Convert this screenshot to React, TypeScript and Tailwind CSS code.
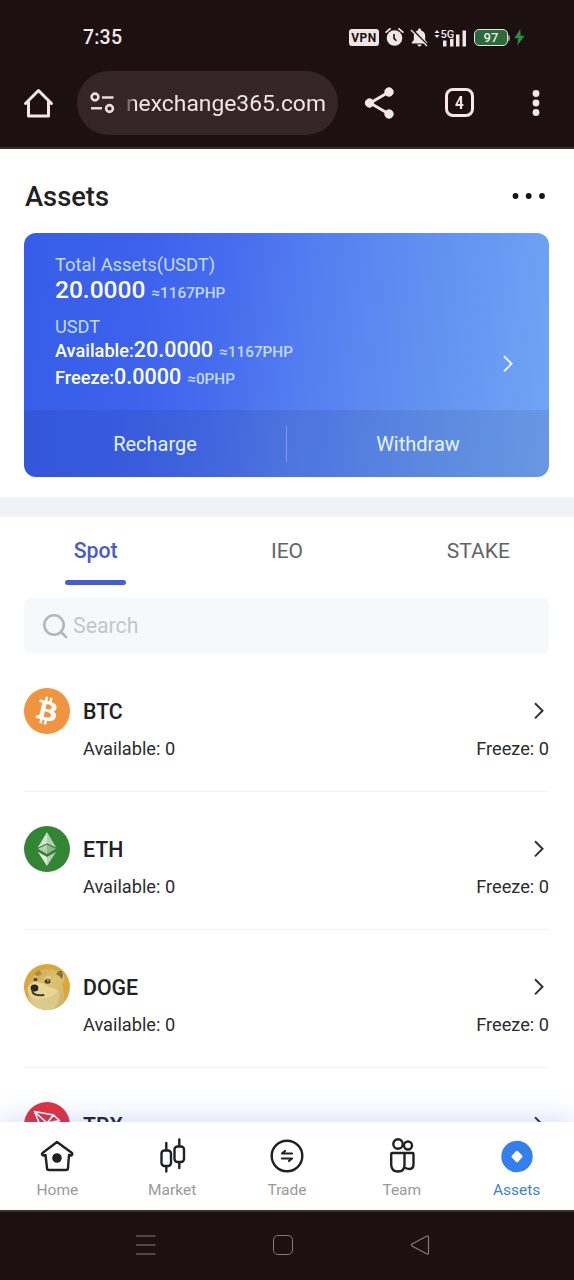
import type { ReactNode } from "react";
import { FaBitcoin } from "react-icons/fa";

function StatusIcons() {
  return (
    <div className="flex items-center">
      <span className="flex h-[17px] w-[30px] items-center justify-center rounded-[3px] bg-[#f0e6e6] text-[12px] leading-none font-bold tracking-[0.5px] text-[#1d1011]">
        VPN
      </span>
      <svg className="ml-[6px]" width="19" height="19" viewBox="0 0 19 19" fill="none">
        <circle cx="9.5" cy="10" r="7.8" fill="#f0e6e6" />
        <path d="M1.2 4.1 5 0.9M17.8 4.1 14 0.9" stroke="#f0e6e6" strokeWidth="1.8" strokeLinecap="round" />
        <path d="M9 6v4.3l2.4 2.4" stroke="#1d1011" strokeWidth="1.6" />
      </svg>
      <svg className="ml-[6px]" width="19" height="19" viewBox="0 0 19 19" fill="none">
        <path d="M9.5 0.5c.9 0 1.5.6 1.5 1.5v.5c2.6.7 4.2 2.7 4.2 5.5v4l2 2.5v1H1.8v-1l2-2.5v-4c0-2.8 1.6-4.8 4.2-5.5V2c0-.9.6-1.5 1.5-1.5ZM7.5 16.5h4c0 1.2-.8 2-2 2s-2-.8-2-2Z" fill="#f0e6e6" />
        <path d="M1.700 0.900 17.700 17.400" stroke="#1d1011" strokeWidth="1.800" />
        <path d="M1 2 17 18" stroke="#f0e6e6" strokeWidth="1.500" />
      </svg>
      <svg className="ml-[5px]" width="34" height="20" viewBox="0 0 34 20">
        <path d="M0.500 5 3 2 5.500 5ZM0.500 7 3 10 5.500 7Z" fill="#f0e6e6" />
        <path d="M9 12.500h3.500V18.500H9ZM16 10.500h3.500v8h-3.500ZM22 6.500h3.500v12h-3.500ZM28.500 2.500h3.500v16h-3.500Z" fill="#f0e6e6" />
        <text x="6.500" y="9.500" fontFamily="Roboto, sans-serif" fontSize="11" fontWeight="500" fill="#f0e6e6" stroke="#1d1011" strokeWidth="1.600" paintOrder="stroke">
          5G
        </text>
      </svg>
      <span className="ml-[6px] flex h-[17px] w-[34px] items-center justify-center rounded-[5px] border-[1.5px] border-[#e9dede] bg-[#2a6b3a] text-[13px] leading-none font-medium text-[#f0e6e6]">
        97
      </span>
      <span className="h-[6px] w-[2px] rounded-r-sm bg-[#8f8585]" />
      <svg className="ml-[4px]" width="11" height="17" viewBox="0 0 11 17">
        <path d="M6.300 0 0.300 9.300h4L3.200 16.500 10.700 6.700H6.600Z" fill="#279243" />
      </svg>
    </div>
  );
}

function BrowserBar() {
  return (
    <div className="flex h-[65px] items-center text-[#f3e3e4]">
      <svg className="mb-[2px] ml-[23px]" width="31" height="32" viewBox="0 0 31 32" fill="none" stroke="#f6e6e6" strokeWidth="3" strokeLinejoin="round" strokeLinecap="round">
        <path d="M2.500 16.500 15.500 3.500l13 13M5.500 14.500V29h20V14.500" />
      </svg>
      <div className="mb-px ml-[23px] flex h-[64px] w-[261px] items-center overflow-hidden rounded-full bg-[#362526]">
        <svg className="ml-[13px] shrink-0" width="25" height="22" viewBox="0 0 25 22" fill="none" stroke="#ecdadb" strokeWidth="2.600">
          <circle cx="5" cy="5" r="3.400" />
          <path d="M12 5.500h11.500M1 16.300h11" />
          <circle cx="19.500" cy="16.500" r="3.400" />
        </svg>
        <div className="mt-[2px] ml-[11px] w-[204px] text-[22.850px] leading-[32px] whitespace-nowrap [mask-image:linear-gradient(90deg,rgba(0,0,0,0.2),black_10px)]">
          nexchange365.com
        </div>
      </div>
      <svg className="mb-[2px] ml-[26px]" width="32" height="34" viewBox="0 0 32 34" fill="#f6e6e6" stroke="#f6e6e6">
        <path d="M25 6 6 17l19 11" fill="none" strokeWidth="2.800" />
        <circle cx="25" cy="6" r="4.200" />
        <circle cx="5.500" cy="17" r="4.200" />
        <circle cx="25" cy="28" r="4.200" />
      </svg>
      <span className="mb-[2px] ml-[49px] flex size-[29px] items-center justify-center rounded-[8px] border-[3px] border-[#f6e6e6] text-[19px] leading-none font-bold">
        <span className="scale-x-80">4</span>
      </span>
      <svg className="mb-[2px] ml-[58px]" width="8" height="28" viewBox="0 0 8 28" fill="#f6e6e6">
        <circle cx="4" cy="4.500" r="3.400" />
        <circle cx="4" cy="14" r="3.400" />
        <circle cx="4" cy="23.500" r="3.400" />
      </svg>
    </div>
  );
}

function Chevron({ className }: { className: string }) {
  return (
    <svg className={className} width="12" height="20" viewBox="0 0 12 20" fill="none" stroke="currentColor" strokeWidth="2">
      <path d="m2 2.200 7.500 7.600L2 17.400" />
    </svg>
  );
}

function AssetCard() {
  return (
    <section className="mx-6 flex h-[244px] w-[525px] flex-col overflow-hidden rounded-xl bg-[linear-gradient(97deg,#365de9_0%,#3c62ed_22%,#466dee_38%,#547ff0_54%,#6292f1_76%,#70a5f5_100%)] text-white">
      <div className="flex h-[177px] pl-[31px]">
        <div className="flex-1 pt-[19px]">
          <div className="h-[25px] text-[18.400px] leading-[26px] text-[#c3dafc]">Total Assets(USDT)</div>
          <div className="flex h-[28px] items-baseline text-[24.500px] leading-[25px] font-medium">
            20.0000<span className="ml-[6px] text-[15.300px] text-[#c3dafc]">≈1167PHP</span>
          </div>
          <div className="mt-[9px] h-[24px] text-[18.200px] leading-[26px] text-[#c3dafc]">USDT</div>
          <div className="flex h-[26px] items-baseline text-[18.200px] leading-[24px] font-medium">
            Available:<span className="text-[21.500px]">20.0000</span>
            <span className="ml-[6px] text-[15.300px] text-[#c3dafc]">≈1167PHP</span>
          </div>
          <div className="flex h-[26px] items-baseline text-[18.200px] leading-[25px] font-medium">
            Freeze:<span className="text-[21.500px]">0.0000</span>
            <span className="ml-[6px] text-[15.300px] text-[#c3dafc]">≈0PHP</span>
          </div>
        </div>
        <Chevron className="mt-[121px] mr-[35px] text-[#e6f4ff]" />
      </div>
      <div className="flex h-[67px] items-center bg-black/7 text-[20px] text-[#e6f4ff]">
        <span className="flex-1 text-center">Recharge</span>
        <span className="h-[36px] w-px bg-white/30" />
        <span className="flex-1 text-center">Withdraw</span>
      </div>
    </section>
  );
}

function EthLogo() {
  return (
    <svg width="46" height="46" viewBox="0 0 46 46">
      <circle cx="23" cy="23" r="23" fill="#328532" />
      <path d="M23 6v11.500L13.500 22Z" fill="#d3e6d0" />
      <path d="M23 6v11.500l9.500 4.500Z" fill="#b0d0ad" />
      <path d="M23 18v10l-9.500-5.500Z" fill="#b4d2b0" />
      <path d="M23 18v10l9.500-5.500Z" fill="#8bb98a" />
      <path d="M23 30.500V40l-9.500-14.800Z" fill="#e6f2e3" />
      <path d="M23 30.500V40l9.500-14.800Z" fill="#b5d3b2" />
      <path d="m13.500 22.500 9.500-4.500 9.500 4.500M13.500 25l9.500 5.500 9.500-5.500" fill="none" stroke="#246d2a" strokeWidth="0.800" />
    </svg>
  );
}

function DogeLogo() {
  return (
    <svg width="46" height="46" viewBox="0 0 46 46">
      <defs>
        <clipPath id="dogeClip">
          <circle cx="23" cy="23" r="23" />
        </clipPath>
        <linearGradient id="dogeFur" x1="0" y1="0" x2="1" y2="1">
          <stop offset="0" stopColor="#c9a450" />
          <stop offset="0.5" stopColor="#dcc271" />
          <stop offset="1" stopColor="#cdb264" />
        </linearGradient>
      </defs>
      <g clipPath="url(#dogeClip)">
        <path d="M0 0h46v46H0Z" fill="#dda63a" />
        <path d="M5 46 3 24Q5 14 10 11q4-7 14-6 6 0 9 3 4-4 6 0 3 8-1 13 4 10 1 25Z" fill="url(#dogeFur)" />
        <path d="M32 10q3-5 6-3 2 3 0 8-2-3-6-5Z" fill="#8a7040" />
        <path d="M9 14q2-6 6-8l3 4Z" fill="#ad8a42" />
        <path d="M4 23q4-6 10-5 7 2 11 5 8 1 10 5-3 9-14 9Q6 36 4 27Z" fill="#e8d697" />
        <path d="M5 31q6 6 15 3 10-1 15-8 2 11-6 20H10Z" fill="#dcca8a" />
        <ellipse cx="10.500" cy="24" rx="3.900" ry="3.500" fill="#2b2721" />
        <path d="M8.500 27q0 5 11 4" fill="none" stroke="#4b3e26" strokeWidth="2" strokeLinecap="round" />
        <ellipse cx="11.500" cy="15.500" rx="2" ry="1.600" fill="#463b27" />
        <ellipse cx="23.500" cy="17.500" rx="3" ry="2.100" transform="rotate(-6 23.500 17.500)" fill="#3e3524" />
        <circle cx="24" cy="17" r="0.800" fill="#f3ecd3" />
        <path d="M9.500 12.500q2-1 3 0M21.500 13.500q3-1.500 5 .5" fill="none" stroke="#e6d18e" strokeWidth="1.500" />
      </g>
    </svg>
  );
}

function TrxLogo() {
  return (
    <svg width="46" height="46" viewBox="0 0 46 46" fill="none" stroke="#fff" strokeLinejoin="round">
      <circle cx="23" cy="23" r="23" fill="#e0303a" stroke="none" />
      <path d="m10.500 9.500 19 3.500 6 5.500-14 18ZM10.500 9.500l12.500 11.500 12.500-2.500M23 21l6.500-8M23 21l-1.500 15.500" strokeWidth="1.600" />
    </svg>
  );
}

function BtcLogo() {
  return (
    <div className="rounded-full bg-[radial-gradient(circle,white_60%,#f1943f_62%)]">
      <FaBitcoin className="size-[46px] text-[#f1943f]" />
    </div>
  );
}

function CoinRow({ icon, name }: { icon: ReactNode; name: string }) {
  return (
    <li className="mx-6 flex h-[138px] w-[525px] shrink-0 border-b border-[#f2f2f3] pt-[34px]">
      <div className="size-[46px] shrink-0">{icon}</div>
      <div className="ml-[13px] flex-1">
        <div className="flex h-[46px] items-center justify-between">
          <span className="mt-px text-[21.300px] leading-[31px] font-medium text-[#202123]">{name}</span>
          <Chevron className="mr-[4px] mb-px text-[#323334]" />
        </div>
        <div className="flex h-[30px] items-center justify-between text-[18.200px] leading-[26px] text-[#2b2c2d]">
          <span>Available: 0</span>
          <span>Freeze: 0</span>
        </div>
      </div>
    </li>
  );
}

function NavItem({ label, active = false, children }: { label: string; active?: boolean; children: ReactNode }) {
  return (
    <div className={active ? "flex flex-1 flex-col items-center text-[#3f82cf]" : "flex flex-1 flex-col items-center text-[#98999b]"}>
      <svg className="mt-[16px]" width="36" height="36" viewBox="0 0 36 36" fill="none" stroke="#202123" strokeWidth="2.400" strokeLinejoin="round" strokeLinecap="round">
        {children}
      </svg>
      <span className="mt-[4px] text-[15.500px] leading-[24px]">{label}</span>
    </div>
  );
}

export default function App() {
  return (
    <div className="flex h-[1280px] w-[574px] flex-col overflow-hidden bg-white font-['Roboto',sans-serif]">
      <header className="h-[149px] shrink-0 border-b-2 border-[#3b2d2e] bg-[#1d1011]">
        <div className="flex h-[71px] items-center justify-between pt-[4px] pr-[49px] pl-[83px]">
          <span className="text-[19.500px] font-medium tracking-[0.200px] text-[#f3e9e9]">7:35</span>
          <StatusIcons />
        </div>
        <BrowserBar />
      </header>

      <main className="flex min-h-0 flex-1 flex-col overflow-hidden">
        <div className="flex h-[84px] shrink-0 items-center justify-between pt-[12px] pr-[28px] pl-[25px]">
          <h1 className="text-[27.300px] font-medium text-[#202123]">Assets</h1>
          <svg width="34" height="8" viewBox="0 0 34 8" fill="#151617">
            <circle cx="3.500" cy="3" r="2.900" />
            <circle cx="16.700" cy="3" r="2.900" />
            <circle cx="30" cy="3" r="2.900" />
          </svg>
        </div>
        <div className="shrink-0">
          <AssetCard />
        </div>
        <div className="mt-[20px] h-[20px] shrink-0 bg-[#f0f2f7]" />
        <nav className="flex h-[81px] shrink-0 text-[21px] text-[#636466]">
          <div className="flex flex-1 flex-col items-center pt-[18px] font-medium text-[#465dcc]">
            <span className="h-[30px] text-[21.300px] leading-[31px]">Spot</span>
            <span className="mt-[15px] h-[5px] w-[61px] rounded-full bg-[#465ed4]" />
          </div>
          <div className="flex-1 pt-[18px] text-center leading-[32px]">IEO</div>
          <div className="flex-1 pt-[18px] text-center leading-[32px]">STAKE</div>
        </nav>
        <div className="mx-6 flex h-[56px] w-[525px] shrink-0 items-center rounded-md bg-[#f7f8fa] pl-[18px]">
          <svg width="27" height="27" viewBox="0 0 27 27" fill="none" stroke="#b1b7c1" strokeWidth="2.600" strokeLinecap="round">
            <circle cx="12" cy="12" r="9.700" />
            <path d="m19 19 5 5" />
          </svg>
          <span className="mb-px ml-[4px] text-[21.300px] text-[#c3c6cb]">Search</span>
        </div>
        <ul className="min-h-0 flex-1 overflow-hidden">
          <CoinRow icon={<BtcLogo />} name="BTC" />
          <CoinRow icon={<EthLogo />} name="ETH" />
          <CoinRow icon={<DogeLogo />} name="DOGE" />
          <CoinRow icon={<TrxLogo />} name="TRX" />
        </ul>
      </main>

      <nav className="relative flex h-[88px] shrink-0 bg-white shadow-[0_0_28px_rgba(70,110,235,0.28)]">
        <NavItem label="Home">
          <path d="M18 4 33 15q1 2-1 2.500l-2-.5-1 13q0 2-2 2H10q-2 0-2-2L6.500 17l-2 .5Q2 17 3.500 15Z" />
          <circle cx="18" cy="20" r="3.600" fill="#202123" />
        </NavItem>
        <NavItem label="Market">
          <g transform="translate(1 0)">
            <rect x="6.500" y="12.500" width="9.500" height="15.500" rx="3" />
            <rect x="19.500" y="8.500" width="9.500" height="15.500" rx="3" />
            <path d="M11.300 5v7M11.300 28.500v5M24.300 1.500v6.500M24.300 24.500v5.500" />
          </g>
        </NavItem>
        <NavItem label="Trade">
          <circle cx="18" cy="18" r="15.300" />
          <path d="M23 15.500H13l3-2.500M13 20.500h10l-3 2.500" strokeWidth="2.200" />
        </NavItem>
        <NavItem label="Team">
          <circle cx="14" cy="6" r="4.700" />
          <circle cx="24" cy="7.500" r="4" />
          <path d="M8 15h20.500q1 0 1 1v10q0 5-4 5-2 0-4-1M20.500 15v12q0 6.500-6.500 6.500T7.200 27V16q0-1 .8-1Z" />
        </NavItem>
        <NavItem label="Assets" active>
          <circle cx="18" cy="18.500" r="15.700" fill="#347eed" stroke="none" />
          <path d="m18 14.300 4 4.200-4 4.200-4-4.200Z" fill="#fff" stroke="#fff" strokeWidth="3" />
        </NavItem>
      </nav>

      <footer className="relative flex h-[70px] shrink-0 items-center border-t-2 border-[#3b3132] bg-[#1d1011] pb-[2px]">
        <svg className="ml-[135px]" width="22" height="22" viewBox="0 0 22 22" stroke="#857a7b" strokeWidth="1.200">
          <path d="M1 2h19.500M1 11h19.500M1 20h19.500" />
        </svg>
        <span className="ml-[116px] size-[20px] rounded-[5px] border border-[#857a7b]" />
        <svg className="ml-[117px]" width="20" height="22" viewBox="0 0 20 22" fill="none" stroke="#857a7b" strokeWidth="1.200" strokeLinejoin="round">
          <path d="M17 2q1.500-.5 1.500 1v16q0 1.500-1.500 1L2 12q-1.500-1 0-2Z" />
        </svg>
      </footer>
    </div>
  );
}
